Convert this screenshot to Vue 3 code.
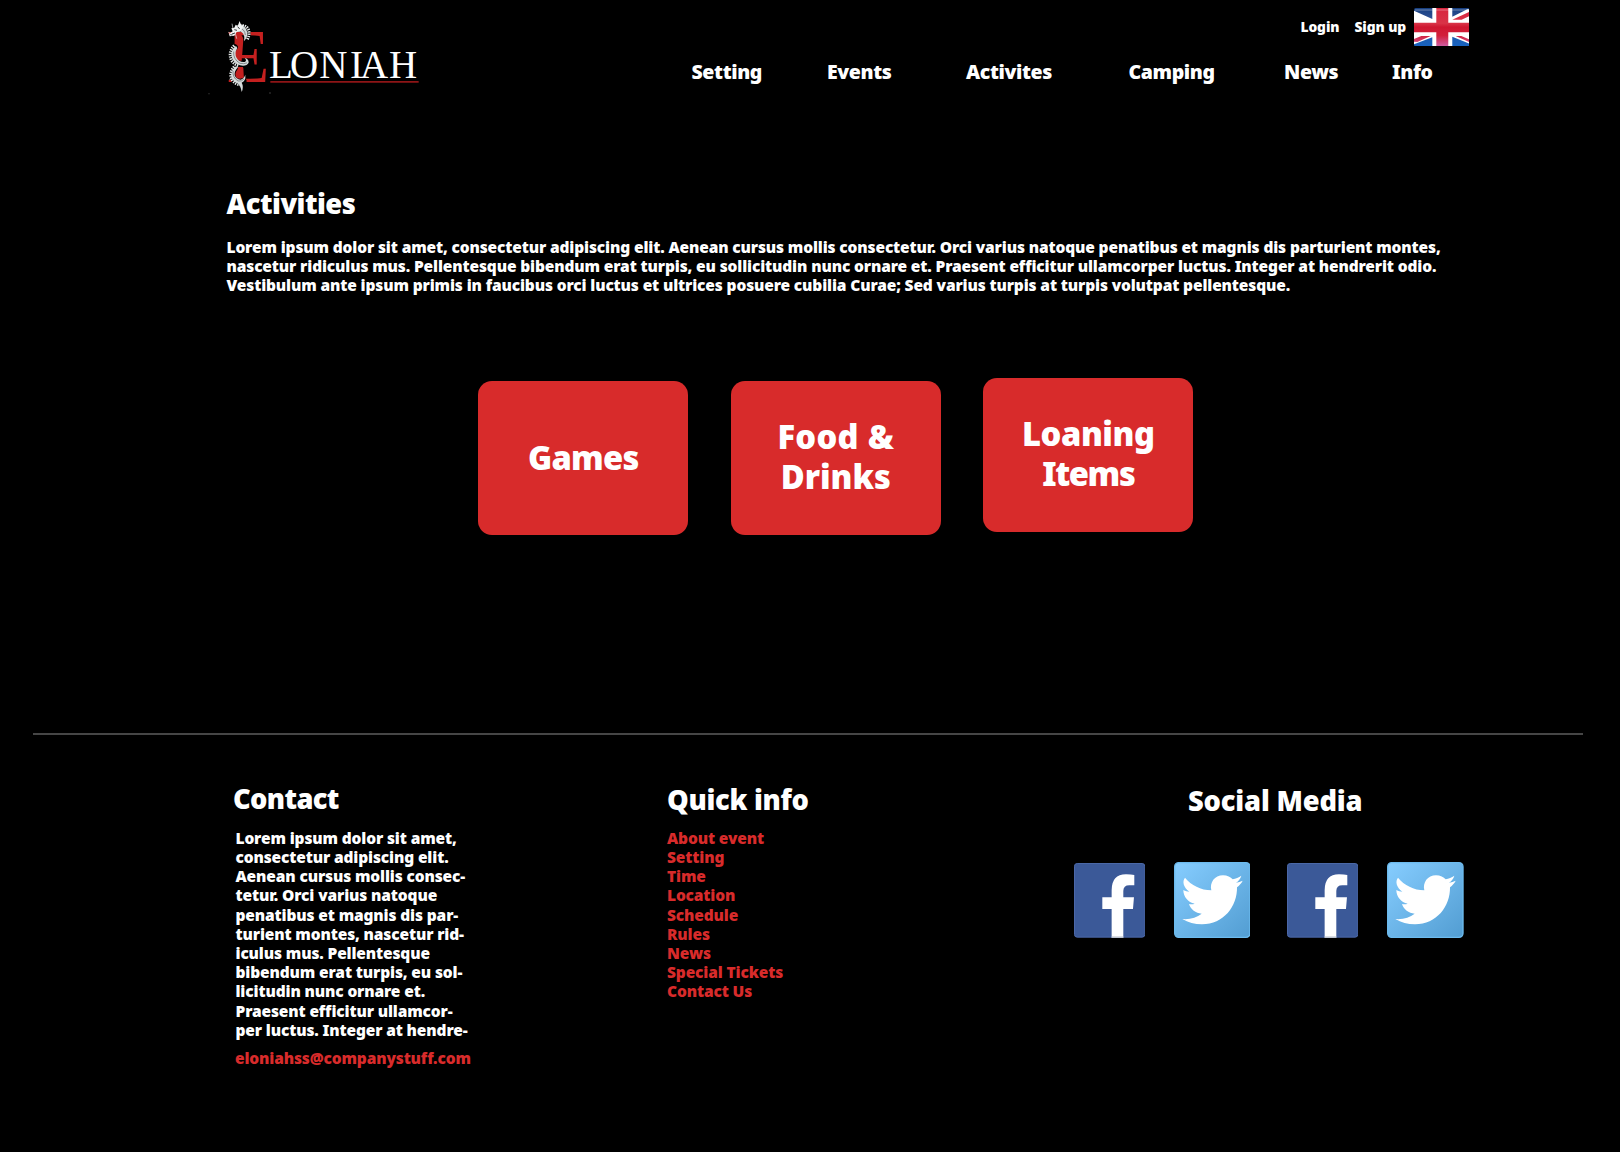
<script setup>
const nav = ['Setting', 'Events', 'Activites', 'Camping', 'News', 'Info']

const intro = [
  'Lorem ipsum dolor sit amet, consectetur adipiscing elit. Aenean cursus mollis consectetur. Orci varius natoque penatibus et magnis dis parturient montes,',
  'nascetur ridiculus mus. Pellentesque bibendum erat turpis, eu sollicitudin nunc ornare et. Praesent efficitur ullamcorper luctus. Integer at hendrerit odio.',
  'Vestibulum ante ipsum primis in faucibus orci luctus et ultrices posuere cubilia Curae; Sed varius turpis at turpis volutpat pellentesque.',
]

const contact = [
  'Lorem ipsum dolor sit amet,',
  'consectetur adipiscing elit.',
  'Aenean cursus mollis consec-',
  'tetur. Orci varius natoque',
  'penatibus et magnis dis par-',
  'turient montes, nascetur rid-',
  'iculus mus. Pellentesque',
  'bibendum erat turpis, eu sol-',
  'licitudin nunc ornare et.',
  'Praesent efficitur ullamcor-',
  'per luctus. Integer at hendre-',
]

const links = ['About event', 'Setting', 'Time', 'Location', 'Schedule', 'Rules', 'News', 'Special Tickets', 'Contact Us']

const social = ['facebook', 'twitter', 'facebook', 'twitter']
</script>

<template>
  <div class="page">
    <header class="header">
      <svg class="logo" viewBox="0 0 720 330" width="240" height="110" aria-label="Eloniah">
        <text class="logo-e" transform="translate(80 246) scale(.925 1)" font-size="226">E</text>
        <path fill="#c4201f" d="M112 106Q126 98 130 118L127 160Q122 190 130 205L132 240L116 246Q106 200 112 180L107 150Z" />
        <text class="logo-name" x="207 270 358 450 480 567" y="235" font-size="117">LONIAH</text>
        <path d="M211 245.500H656" stroke="#8e1416" stroke-width="5" />
        <!-- dragon coils -->
        <g fill="none" stroke-linecap="round" stroke-linejoin="round">
          <path stroke="#000" stroke-width="19" d="M118 82Q146 84 142 112M104 142Q88 158 97 178Q108 196 134 190M104 204Q88 224 104 241Q116 250 130 243" />
          <path stroke="#e6eaea" stroke-width="9" stroke-dasharray="4 3" stroke-linecap="butt" d="M120 76Q146 76 147 98Q148 108 141 120" />
          <path stroke="#e6eaea" stroke-width="9" stroke-dasharray="4 3" stroke-linecap="butt" d="M103 137Q84 156 94 180Q102 194 118 197" />
          <path stroke="#e6eaea" stroke-width="9" stroke-dasharray="4 3" stroke-linecap="butt" d="M103 200Q84 222 99 243Q108 253 120 254" />
          <path fill="#d5dada" d="M112 76Q140 76 142 98Q143 112 132 124Q136 104 124 96Q116 92 112 94Z" />
          <path fill="#d5dada" d="M108 138Q92 150 94 166Q98 190 120 196Q140 200 146 188Q146 176 134 174Q142 182 134 186Q118 188 110 174Q102 160 112 144Z" />
          <path fill="#d5dada" d="M108 199Q90 214 94 230Q98 244 114 250Q122 258 125 276Q132 260 125 248Q138 242 136 224Q132 236 122 239Q108 238 104 226Q102 214 114 202Z" />
          <path stroke="#5a6163" stroke-width="2" d="M118 84Q134 86 136 104M101 156Q99 178 120 190Q132 193 140 189M99 214Q97 232 114 243Q126 245 131 238" />
        </g>
        <path fill="#f1f3f3" d="M119 63L123 76L133 75L126 87L119 95L110 96L103 107L89 109L87 101L98 94L94 85L103 83L107 74L113 78Z" />
        <path stroke="#e6e8e8" stroke-width="2" d="M96 71L99 86M85 97L92 100M106 100L110 116M88 238L98 235" />
        <path stroke="#15181a" stroke-width="2.500" fill="none" d="M103 89L111 91M96 102L105 99M113 80L119 87M91 104L97 105" />
        <path fill="#3b3b3b" d="M25 280h4v3h-4zM208 277h4v4h-4z" />
      </svg>
      <div class="header-side">
        <div class="account">
          <a class="login">Login</a>
          <a class="signup">Sign up</a>
          <svg class="flag" viewBox="0 0 167 115" width="55.600" height="38.300">
            <defs>
              <linearGradient id="flag-blue" x1="0" y1="0" x2="0" y2="1">
                <stop offset="0" stop-color="#173f80" />
                <stop offset=".25" stop-color="#2b4f93" />
                <stop offset="1" stop-color="#1763c0" />
              </linearGradient>
              <linearGradient id="flag-red" gradientUnits="userSpaceOnUse" x1="0" y1="0" x2="0" y2="115">
                <stop offset="0" stop-color="#d8263e" />
                <stop offset=".4" stop-color="#d93347" />
                <stop offset=".5" stop-color="#cf1730" />
                <stop offset=".72" stop-color="#d2203b" />
                <stop offset="1" stop-color="#cf5ea4" />
              </linearGradient>
              <clipPath id="flag-shape"><rect width="167" height="115" rx="5" /></clipPath>
            </defs>
            <g clip-path="url(#flag-shape)">
              <rect width="167" height="115" fill="url(#flag-blue)" />
              <path fill="#fff" d="M0 8L55 33V0H115V26L160 4H167V107L115 86V115H55V88L0 109Z" />
              <path fill="url(#flag-red)" d="M67 0H103V44H167V73H103V115H67V73H0V44H67ZM115 35L167 11V24L143 35ZM0 101V93L22 84H50L10 102ZM125 84H142L167 95V103Z" />
              <path d="M3 6H164" stroke="#fff" stroke-opacity=".55" stroke-width="2" />
            </g>
          </svg>
        </div>
        <nav class="nav">
          <a v-for="item in nav" :key="item">{{ item }}</a>
        </nav>
      </div>
    </header>

    <main class="main">
      <h1>Activities</h1>
      <p class="intro"><span v-for="line in intro" :key="line">{{ line }}</span></p>
      <div class="cards">
        <a class="card games">Games</a>
        <a class="card"><span class="food">Food &amp;</span><span class="drinks">Drinks</span></a>
        <a class="card raised"><span class="loaning">Loaning</span><span class="items">Items</span></a>
      </div>
    </main>

    <footer class="footer">
      <section class="contact">
        <h2>Contact</h2>
        <p class="copy"><span v-for="line in contact" :key="line">{{ line }}</span></p>
        <a class="email">eloniahss@companystuff.com</a>
      </section>
      <section class="quick">
        <h2>Quick info</h2>
        <ul>
          <li v-for="link in links" :key="link"><a>{{ link }}</a></li>
        </ul>
      </section>
      <section class="social">
        <h2>Social Media</h2>
        <div class="icons">
          <template v-for="(name, i) in social" :key="i">
            <svg v-if="name === 'facebook'" class="facebook" viewBox="0 0 214 225" width="71.300" height="75">
              <rect x="1.500" y="1.500" width="211" height="221" rx="8" fill="#3b5998" stroke="#4c69aa" stroke-width="3" />
              <path fill="#fff" d="M113 224V138H85V103H113V82Q113 34 156 34Q172 34 181 36V67H166Q148 67 148 84V103H180L177 138H148V224Z" />
              <path d="M113 222.500H148" stroke="#b9bfcc" stroke-width="4" />
            </svg>
            <svg v-else class="twitter" viewBox="0 0 230 228" width="76.700" height="76">
              <defs>
                <linearGradient :id="'sky-' + i" x1="0" y1="0" x2="1" y2="1">
                  <stop offset="0" stop-color="#86cdff" />
                  <stop offset="1" stop-color="#529dd2" />
                </linearGradient>
              </defs>
              <rect x="2" y="2" width="226" height="224" rx="12" :fill="'url(#sky-' + i + ')'" stroke="#6dbbee" stroke-width="4" />
              <path fill="#fff" d="M33 47C52 70 80 84 112 85C106 62 122 40 147 40C160 40 170 45 176 52C185 50 194 46 202 41C199 50 194 57 186 62C193 61 200 59 206 56C202 64 196 70 189 76C190 133 149 187 84 187C62 187 42 181 25 171C48 173 68 167 83 155C65 154 50 142 45 126C51 127 57 127 62 125C42 121 28 104 28 84C34 87 40 89 46 89C28 76 24 57 33 47Z" />
            </svg>
          </template>
        </div>
      </section>
    </footer>
  </div>
</template>

<style>
body {
  margin: 0;
  background: #000;
}
</style>

<style scoped>
.page {
  width: 1620px;
  height: 1152px;
  overflow: hidden;
  background: #000;
  color: #fff;
  font: 900 15.5px/19.2px "Noto Sans", "Open Sans", sans-serif;
  letter-spacing: -0.135px;
}

h1,
h2,
p,
ul {
  margin: 0;
  padding: 0;
}

h1,
h2 {
  font-size: 27.300px;
  line-height: 34px;
  font-weight: 900;
}

.header {
  display: flex;
  height: 110px;
  padding-left: 200px;
}

.logo-e,
.logo-name {
  font-family: "Liberation Serif", serif;
  font-weight: 400;
  letter-spacing: 0;
}

.logo-e {
  fill: #c4201f;
}

.logo-name {
  fill: #fff;
}

.header-side {
  display: flex;
  flex-direction: column;
  width: 1180px;
}

.account {
  display: flex;
  height: 60px;
  box-sizing: border-box;
  padding: 0 0 0 860.500px;
  font-size: 13.800px;
  line-height: 18px;
  letter-spacing: -0.1px;
}

.login,
.signup {
  margin-top: 18px;
}

.login {
  width: 54px;
}

.signup {
  width: 59.300px;
}

.flag {
  margin-top: 8px;
}

.nav {
  display: grid;
  grid-template-columns: 135.500px 139px 162.500px 155.500px 108px 60px;
  padding-left: 251.500px;
  font-size: 19.500px;
  line-height: 24px;
  letter-spacing: -0.38px;
}

.main {
  width: 1550px;
  height: 625px;
  margin: 0 33px;
  padding: 77px 0 0 193.500px;
  box-sizing: border-box;
  border-bottom: 2px solid #464646;
}

h1 {
  letter-spacing: -0.52px;
}

.intro {
  margin-top: 17px;
}

.intro span,
.copy span {
  display: block;
  white-space: nowrap;
}

.cards {
  display: flex;
  gap: 42.500px;
  margin: 85.700px 0 0 251.800px;
}

.card {
  display: flex;
  flex-direction: column;
  align-items: center;
  justify-content: center;
  box-sizing: border-box;
  width: 210px;
  height: 154px;
  padding-bottom: 2px;
  border-radius: 14px;
  background: #d82b2b;
  font-size: 32.700px;
  line-height: 40px;
}

.games {
  padding-bottom: 0;
  letter-spacing: -0.75px;
}

.food {
  letter-spacing: 0.3px;
}

.drinks {
  letter-spacing: 0;
}

.raised {
  margin-top: -3px;
  margin-bottom: 3px;
}

.loaning {
  letter-spacing: -0.45px;
}

.items {
  letter-spacing: -1.4px;
}

.footer {
  display: grid;
  grid-template-columns: 434px 406px 400px;
  padding: 47.300px 0 0 233px;
}

.contact h2 {
  letter-spacing: -0.64px;
}

.contact .copy {
  margin: 12.400px 0 9px 2.500px;
}

.email {
  margin-left: 2px;
}

.email,
.quick a {
  color: #d82b2b;
}

.quick {
  padding-top: 1px;
}

.quick h2 {
  letter-spacing: -0.3px;
}

.quick ul {
  margin-top: 11.400px;
  list-style: none;
}

.social {
  padding-top: 2px;
}

.social h2 {
  padding-left: 115px;
  letter-spacing: -0.17px;
}

.icons {
  display: flex;
  align-items: flex-end;
  margin-top: 43.700px;
  padding-left: 0.500px;
}

.facebook,
.twitter {
  flex: none;
}

.facebook {
  margin-right: 29px;
}

.twitter {
  margin-right: 36.300px;
}
</style>
